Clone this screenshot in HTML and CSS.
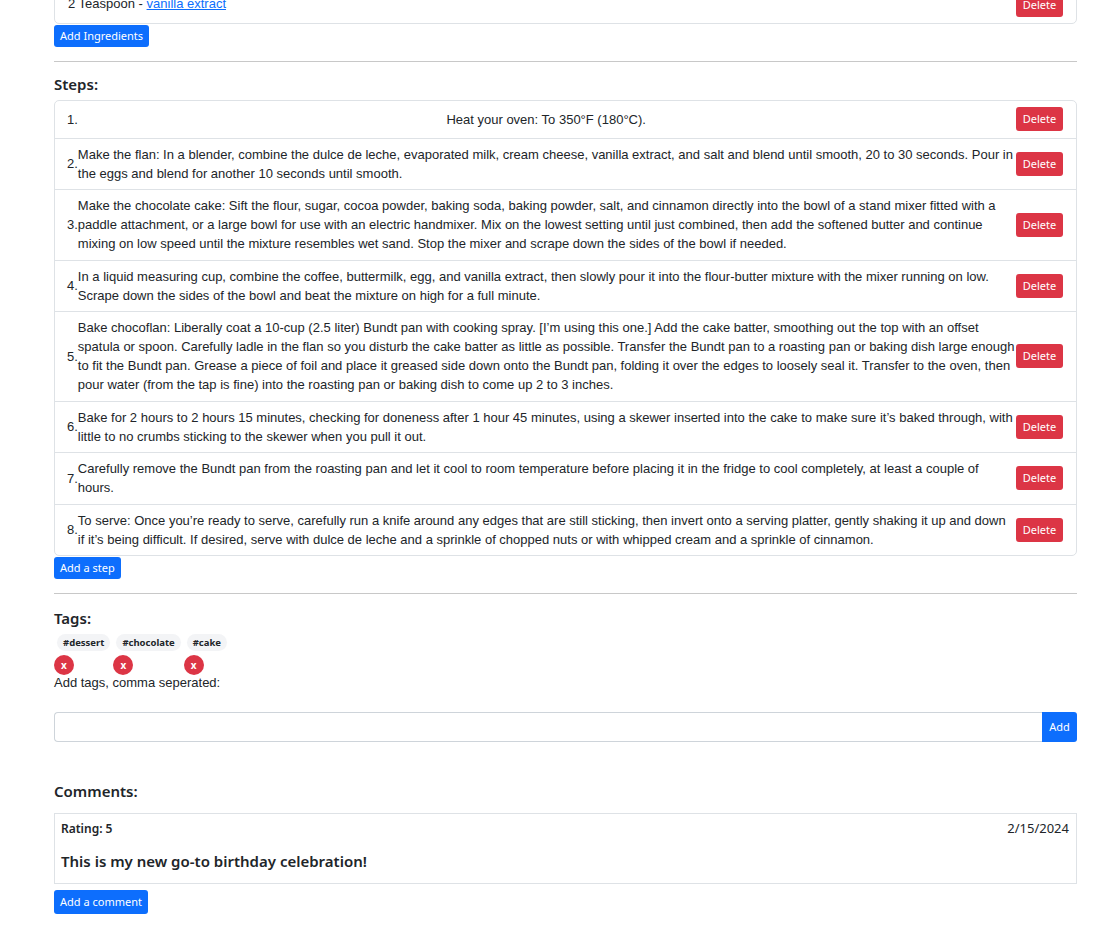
FILE: index.html
```html
<!DOCTYPE html>
<html lang="en">
<head>
<meta charset="utf-8">
<title>Recipe</title>
<link rel="stylesheet" href="styles.css">
</head>
<body>
<main class="page">
  <ul class="list-group ingredients">
    <li class="item">
      <span class="text">2 Teaspoon - <a href="#" class="link">vanilla extract</a></span>
      <button class="btn btn-danger">Delete</button>
    </li>
  </ul>
  <button class="btn btn-primary btn-add">Add Ingredients</button>
  <hr class="divider">

  <h5 class="section-title">Steps:</h5>
  <ul class="list-group steps">
    <li class="item"><span class="num">1.</span><span class="text">Heat your oven: To 350°F (180°C).</span><button class="btn btn-danger">Delete</button></li>
    <li class="item"><span class="num">2.</span><span class="text">Make the flan: In a blender, combine the dulce de leche, evaporated milk, cream cheese, vanilla extract, and salt and blend until smooth, 20 to 30 seconds. Pour in the eggs and blend for another 10 seconds until smooth.</span><button class="btn btn-danger">Delete</button></li>
    <li class="item"><span class="num">3.</span><span class="text">Make the chocolate cake: Sift the flour, sugar, cocoa powder, baking soda, baking powder, salt, and cinnamon directly into the bowl of a stand mixer fitted with a paddle attachment, or a large bowl for use with an electric handmixer. Mix on the lowest setting until just combined, then add the softened butter and continue mixing on low speed until the mixture resembles wet sand. Stop the mixer and scrape down the sides of the bowl if needed.</span><button class="btn btn-danger">Delete</button></li>
    <li class="item"><span class="num">4.</span><span class="text">In a liquid measuring cup, combine the coffee, buttermilk, egg, and vanilla extract, then slowly pour it into the flour-butter mixture with the mixer running on low. Scrape down the sides of the bowl and beat the mixture on high for a full minute.</span><button class="btn btn-danger">Delete</button></li>
    <li class="item"><span class="num">5.</span><span class="text">Bake chocoflan: Liberally coat a 10-cup (2.5 liter) Bundt pan with cooking spray. [I’m using this one.] Add the cake batter, smoothing out the top with an offset spatula or spoon. Carefully ladle in the flan so you disturb the cake batter as little as possible. Transfer the Bundt pan to a roasting pan or baking dish large enough to fit the Bundt pan. Grease a piece of foil and place it greased side down onto the Bundt pan, folding it over the edges to loosely seal it. Transfer to the oven, then pour water (from the tap is fine) into the roasting pan or baking dish to come up 2 to 3 inches.</span><button class="btn btn-danger">Delete</button></li>
    <li class="item"><span class="num">6.</span><span class="text">Bake for 2 hours to 2 hours 15 minutes, checking for doneness after 1 hour 45 minutes, using a skewer inserted into the cake to make sure it’s baked through, with little to no crumbs sticking to the skewer when you pull it out.</span><button class="btn btn-danger">Delete</button></li>
    <li class="item"><span class="num">7.</span><span class="text">Carefully remove the Bundt pan from the roasting pan and let it cool to room temperature before placing it in the fridge to cool completely, at least a couple of hours.</span><button class="btn btn-danger">Delete</button></li>
    <li class="item"><span class="num">8.</span><span class="text">To serve: Once you’re ready to serve, carefully run a knife around any edges that are still sticking, then invert onto a serving platter, gently shaking it up and down if it’s being difficult. If desired, serve with dulce de leche and a sprinkle of chopped nuts or with whipped cream and a sprinkle of cinnamon.</span><button class="btn btn-danger">Delete</button></li>
  </ul>
  <button class="btn btn-primary btn-add">Add a step</button>
  <hr class="divider">

  <h5 class="section-title tags-title">Tags:</h5>
  <div class="tags">
    <div class="tag"><span class="pill">#dessert</span><button class="remove">x</button></div>
    <div class="tag"><span class="pill">#chocolate</span><button class="remove">x</button></div>
    <div class="tag"><span class="pill">#cake</span><button class="remove">x</button></div>
  </div>
  <label class="tag-label">Add tags, comma seperated:</label>
  <div class="input-group">
    <input class="input" type="text">
    <button class="btn btn-primary btn-group-end">Add</button>
  </div>

  <h5 class="section-title comments-title">Comments:</h5>
  <div class="comment">
    <div class="comment-head"><span class="rating">Rating: 5</span><span class="date">2/15/2024</span></div>
    <p class="comment-text">This is my new go-to birthday celebration!</p>
  </div>
  <button class="btn btn-primary btn-add btn-comment">Add a comment</button>
</main>
</body>
</html>
```

FILE: styles.css
```css
* { box-sizing: border-box; }
html, body { margin: 0; padding: 0; background: #fff; }
body {
  font-family: "Liberation Sans", Arial, sans-serif;
  font-size: 13px;
  color: #212529;
}
.page {
  width: 1023px;
  margin: -15px 0 0 54px;
  padding-bottom: 40px;
}
.list-group {
  list-style: none;
  margin: 0;
  padding: 0;
  border: 1px solid #dee2e6;
  border-radius: 5px;
}
.item {
  display: flex;
  align-items: center;
  justify-content: space-between;
  padding: 6.25px 13px 6.25px 12px;
  line-height: 19px;
  border-top: 1px solid #dee2e6;
}
.item:first-child { border-top: 0; }
.ingredients .item { padding: 6.5px 13px; line-height: 18.5px; }
.steps { min-height: 456px; }
.num { flex: none; }
.text { flex: 0 1 auto; }
.steps .text { padding-right: 1.5px; }
.link { color: #0d6efd; text-decoration: underline; }
.btn {
  font-family: "Noto Sans", "Open Sans", sans-serif;
  font-size: 11px;
  line-height: 16px;
  border: 0;
  border-radius: 3px;
  color: #fff;
  cursor: pointer;
}
.btn-danger {
  background: #dc3545;
  flex: none;
  height: 24px;
  width: 47px;
  padding: 0;
}
.btn-primary { background: #0d6efd; }
.btn-add {
  display: block;
  height: 22px;
  padding: 0 6px;
  margin-top: 1px;
}
.divider {
  border: 0;
  border-top: 1px solid #c8c8c8;
  margin: 14px 0 0;
}
.section-title {
  font-family: "Noto Sans", "Open Sans", sans-serif;
  font-size: 15px;
  font-weight: 600;
  line-height: 22px;
  margin: 11px 0 5px;
}
.tags-title { margin-top: 13px; }
.tags { display: flex; margin-top: 1px; }
.tag {
  display: flex;
  flex-direction: column;
  align-items: flex-start;
}
.pill {
  font-family: "Noto Sans", "Open Sans", sans-serif;
  font-size: 9.5px;
  font-weight: 700;
  line-height: 17px;
  padding: 0 6px;
  margin: 0 3px;
  background: #f3f4f6;
  border-radius: 9px;
}
.remove {
  width: 20px;
  height: 20px;
  border-radius: 50%;
  border: 0;
  background: #dc3545;
  color: #fff;
  font-family: "Noto Sans", sans-serif;
  font-size: 10px;
  font-weight: 700;
  padding: 0;
  margin-top: 4px;
  line-height: 20px;
}
.tag-label { display: block; line-height: 16px; margin-top: 0; }
.input-group {
  display: flex;
  margin-top: 21px;
  height: 30px;
}
.input {
  flex: 1;
  border: 1px solid #ced4da;
  border-right: 0;
  border-radius: 4px 0 0 4px;
  height: 30px;
}
.btn-group-end {
  width: 35px;
  height: 30px;
  padding: 0;
  border-radius: 0 3px 3px 0;
}
.comments-title { margin-top: 38px; margin-bottom: 11px; }
.comment {
  border: 1px solid #dee2e6;
  padding: 6px 7px 12px 6px;
  font-family: "Noto Sans", "Open Sans", sans-serif;
}
.comment-head {
  display: flex;
  justify-content: space-between;
  align-items: center;
  line-height: 17px;
}
.rating { font-size: 12px; font-weight: 600; }
.date { font-size: 13px; }
.comment-text {
  margin: 14px 0 0;
  font-size: 15px;
  font-weight: 600;
  line-height: 20px;
}
.btn-comment { height: 24px; margin-top: 6px; }
```
